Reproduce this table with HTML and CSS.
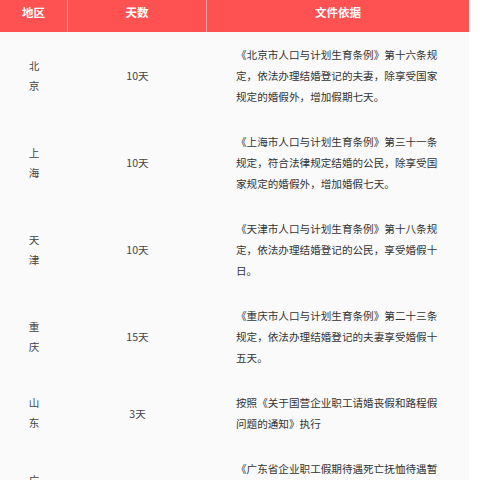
FILE: index.html
```html
<!DOCTYPE html>
<html lang="zh">
<head>
<meta charset="utf-8">
<link rel="stylesheet" href="styles.css">
</head>
<body>
<div class="table">
  <div class="head">地区</div>
  <div class="head">天数</div>
  <div class="head last">文件依据</div>

  <div class="cell region"><span class="vert">北京</span></div>
  <div class="cell days">10天</div>
  <div class="cell doc">《北京市人口与计划生育条例》第十六条规定，依法办理结婚登记的夫妻，除享受国家规定的婚假外，增加假期七天。</div>

  <div class="cell region"><span class="vert">上海</span></div>
  <div class="cell days">10天</div>
  <div class="cell doc">《上海市人口与计划生育条例》第三十一条规定，符合法律规定结婚的公民，除享受国家规定的婚假外，增加婚假七天。</div>

  <div class="cell region"><span class="vert">天津</span></div>
  <div class="cell days">10天</div>
  <div class="cell doc">《天津市人口与计划生育条例》第十八条规定，依法办理结婚登记的公民，享受婚假十日。</div>

  <div class="cell region"><span class="vert">重庆</span></div>
  <div class="cell days">15天</div>
  <div class="cell doc">《重庆市人口与计划生育条例》第二十三条规定，依法办理结婚登记的夫妻享受婚假十五天。</div>

  <div class="cell region"><span class="vert">山东</span></div>
  <div class="cell days">3天</div>
  <div class="cell doc">按照《关于国营企业职工请婚丧假和路程假问题的通知》执行</div>

  <div class="cell region"><span class="vert">广东</span></div>
  <div class="cell days">3天</div>
  <div class="cell doc">《广东省企业职工假期待遇死亡抚恤待遇暂行规定》第七条规定，职工本人结婚，可享受婚假三天。</div>
</div>
</body>
</html>
```

FILE: styles.css
```css
html, body {
  margin: 0;
  padding: 0;
  background: #ffffff;
}

body {
  font-family: "Noto Sans CJK SC", "Noto Sans", sans-serif;
}

.table {
  width: 469px;
  display: grid;
  grid-template-columns: 68px 139px 262px;
  background: #fafafa;
}

.head {
  background: #fe5252;
  color: #ffffff;
  font-weight: bold;
  font-size: 11.5px;
  line-height: 18px;
  text-align: center;
  padding: 3px 0 11px;
  border-right: 1px solid rgba(255, 255, 255, 0.45);
}

.head.last {
  border-right: none;
}

.cell {
  padding: 12px 0;
  font-size: 10.6px;
  color: #444;
  display: flex;
  align-items: center;
}

.region {
  justify-content: center;
  line-height: 20px;
}

.vert {
  display: block;
  width: 1em;
}

.days {
  justify-content: center;
  line-height: 21px;
}

.doc {
  padding: 12px 29px;
  line-height: 21px;
  color: #333;
  display: block;
  align-self: center;
}
```
